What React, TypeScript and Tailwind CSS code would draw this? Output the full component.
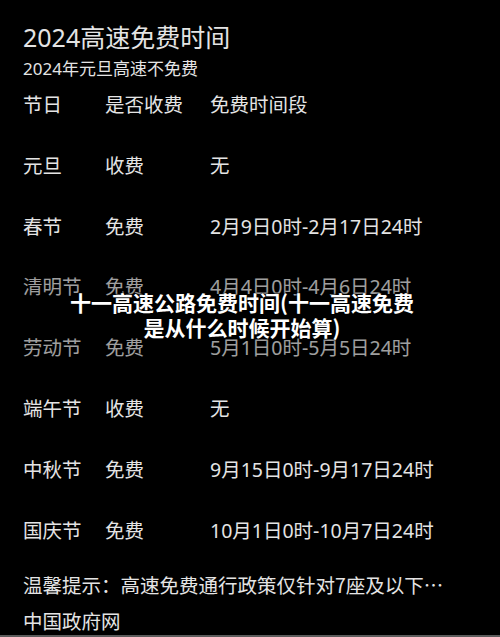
const rows = [
  { day: "元旦", fee: "收费", time: "无" },
  { day: "春节", fee: "免费", time: "2月9日0时-2月17日24时" },
  { day: "清明节", fee: "免费", time: "4月4日0时-4月6日24时" },
  { day: "劳动节", fee: "免费", time: "5月1日0时-5月5日24时" },
  { day: "端午节", fee: "收费", time: "无" },
  { day: "中秋节", fee: "免费", time: "9月15日0时-9月17日24时" },
  { day: "国庆节", fee: "免费", time: "10月1日0时-10月7日24时" },
];

const Row = ({ day, fee, time }: { day: string; fee: string; time: string }) => (
  <div className="flex h-[24px] items-center text-[19.5px] leading-[24px]">
    <span className="w-[82px]">{day}</span>
    <span className="w-[105px]">{fee}</span>
    <span>{time}</span>
  </div>
);

const App = () => {
  return (
    <div className="relative flex h-[637px] w-[500px] flex-col overflow-hidden bg-black font-['Noto_Sans','Noto_Sans_CJK_SC',sans-serif] text-[#e4e4e4]">
      <div className="pl-[23px] pt-[19px]">
        <h1 className="text-[25px] leading-[36px]">2024高速免费时间</h1>
        <p className="text-[17px] leading-[28px]">2024年元旦高速不免费</p>

        <div className="mt-[10px] flex flex-col gap-[36.8px]">
          <Row day="节日" fee="是否收费" time="免费时间段" />
          {rows.map((r) => (
            <Row key={r.day} {...r} />
          ))}
        </div>

        <div className="mt-[30px] flex flex-col gap-[12px] font-['Noto_Sans_CJK_SC',sans-serif] text-[19.5px] leading-[24px]">
          <p>温馨提示：高速免费通行政策仅针对7座及以下…</p>
          <p>中国政府网</p>
        </div>
      </div>

      <div className="mt-auto h-[2px] bg-[#5c5c5c]" />

      {/* caption overlay */}
      <div className="absolute left-0 right-0 top-[262px] h-[110px] bg-black/30" />
      <div className="absolute left-[67px] top-[290px] w-[350px] text-center font-['Noto_Sans_CJK_SC',sans-serif] text-[21px] font-bold leading-[25px] text-white [text-shadow:0_0_3px_#000,0_0_2px_#000]">
        十一高速公路免费时间(十一高速免费
        <br />
        是从什么时候开始算)
      </div>
    </div>
  );
};

export default App;
